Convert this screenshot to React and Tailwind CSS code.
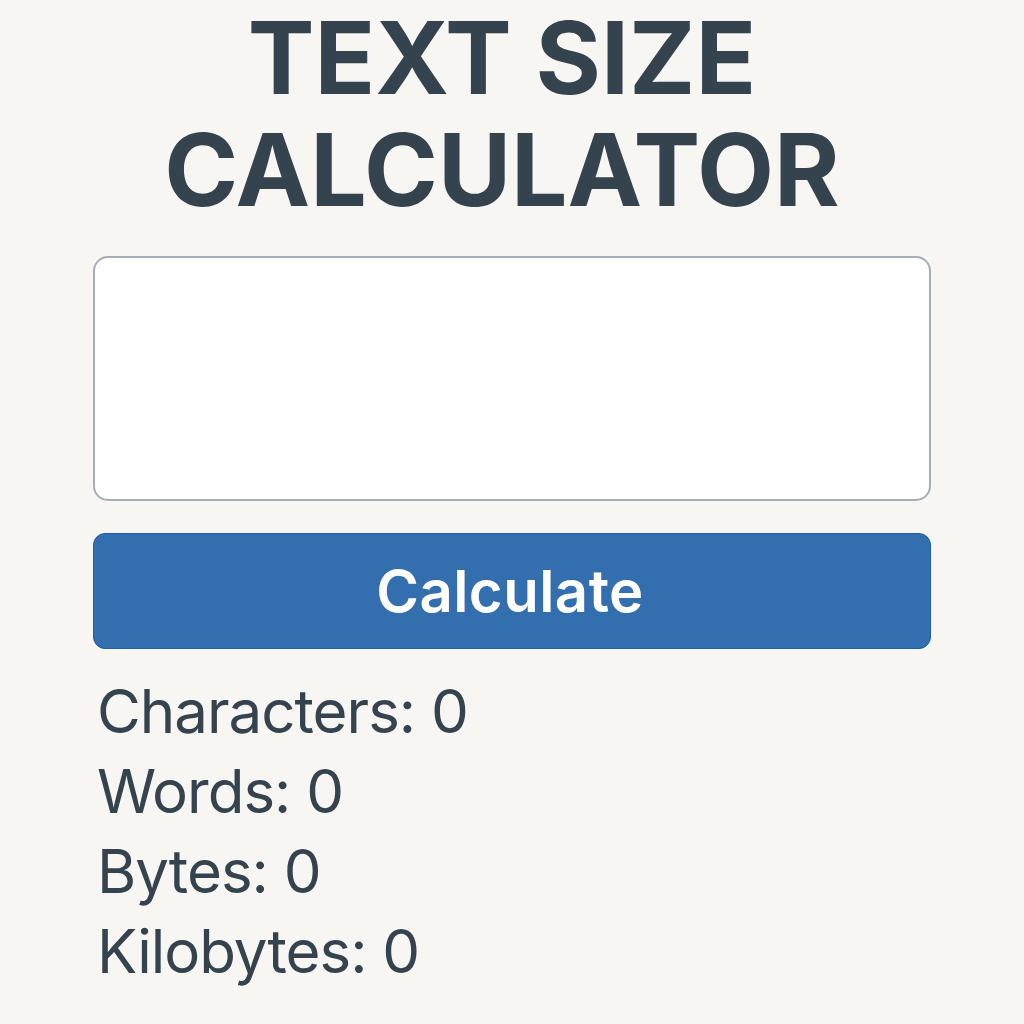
export default function App() {
  return (
    <div className="min-h-[1024px] w-full bg-[#f7f6f3] text-[#35434f]" style={{ fontFamily: "Inter, 'Liberation Sans', sans-serif" }}>
      <div className="mx-auto flex w-[838px] flex-col pt-[2px]">
        <h1 className="pr-[20px] text-center text-[100px] font-bold leading-[112px] tracking-[0px] text-[#35434f]">
          TEXT SIZE
          <br />
          CALCULATOR
        </h1>
        <textarea className="mt-[30px] h-[245px] w-full resize-none rounded-[15px] border-2 border-[#a7aeb8] bg-white outline-none" />
        <button className="mt-[32px] flex h-[116px] w-full items-center justify-center rounded-[12px] border border-[#1f5ea8] bg-[#336fae] pr-[4px] text-[58px] font-semibold tracking-[0.5px] text-white">
          Calculate
        </button>
        <div className="mt-[22px] flex flex-col pl-[4px] text-[60px] leading-[80px] tracking-[-1px] text-[#35434f]">
          <div>Characters: 0</div>
          <div>Words: 0</div>
          <div>Bytes: 0</div>
          <div>Kilobytes: 0</div>
        </div>
      </div>
    </div>
  );
}
